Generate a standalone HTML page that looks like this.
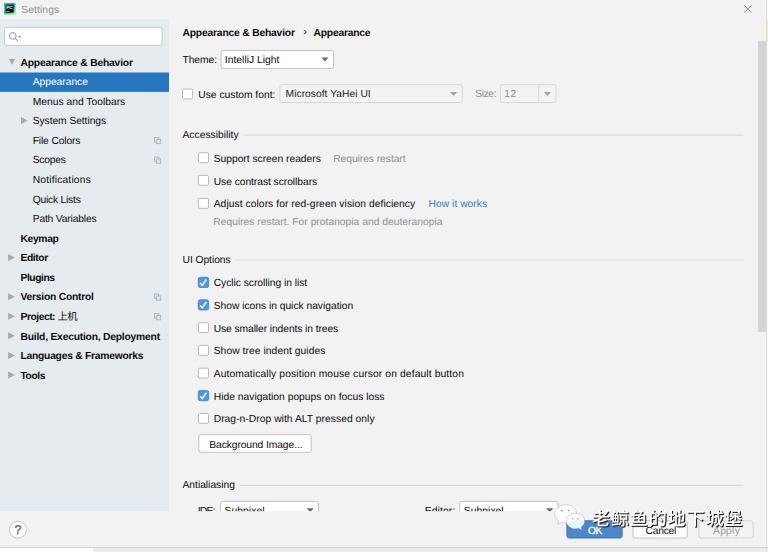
<!DOCTYPE html>
<html lang="en"><head><meta charset="utf-8"><title>Settings</title><style>

*{margin:0;padding:0;box-sizing:border-box}
html,body{width:768px;height:552px;overflow:hidden;background:#f2f2f2}
body{position:relative;font-family:"Liberation Sans", "Noto Sans CJK SC", sans-serif;font-size:10.3px;color:#000;text-rendering:geometricPrecision}
.a{position:absolute}
.t{position:absolute;white-space:nowrap;line-height:15px;height:15px;color:#0c0c0c}
.b{font-weight:bold}
.w{color:#fff}
.ok{-webkit-text-stroke:0.3px #fff}
.gray{color:#909090}
.gray2{color:#9d9d9d}
.dis{color:#1e1e1e}
.link{color:#3a7cbf}

</style></head><body>
<svg class="a" style="left:0;top:0" width="768" height="552" viewBox="0 0 768 552">
<defs><linearGradient id="g1" x1="0" y1="0.6" x2="1" y2="0.2"><stop offset="0" stop-color="#21d789"/><stop offset="0.5" stop-color="#16c5c0"/><stop offset="1" stop-color="#0cb4ec"/></linearGradient>
<linearGradient id="g2" x1="0.35" y1="0.25" x2="1" y2="1"><stop offset="0" stop-color="#fcf84a" stop-opacity="0"/><stop offset="0.5" stop-color="#fcf84a" stop-opacity="0"/><stop offset="1" stop-color="#fcf84a"/></linearGradient></defs>
<rect x="0.00" y="19.10" width="168.90" height="491.90" rx="0.00" fill="#e6ebf0"/>
<rect x="4" y="3" width="11.4" height="11.4" fill="url(#g1)"/><rect x="4" y="3" width="11.4" height="11.4" fill="url(#g2)"/>
<rect x="5.6" y="4.6" width="8" height="8" fill="#0b0b0b"/>
<text x="6.2" y="9.2" font-family="Liberation Sans, sans-serif" font-weight="bold" font-size="4.6" fill="#fff">PC</text>
<rect x="6.4" y="10.9" width="2.9" height="0.6" fill="#fff"/>
<path d="M744.2 5.2 L751.4 12.6 M751.4 5.2 L744.2 12.6" stroke="#777" stroke-width="0.9" fill="none"/>
<rect x="4.60" y="27.60" width="157.50" height="17.70" rx="1.70" fill="#fff" stroke="#c4cacf" stroke-width="1"/>
<circle cx="12.8" cy="35.9" r="3.35" stroke="#85909a" stroke-width="0.95" fill="none"/><path d="M15.2 38.4 L17.7 40.9" stroke="#85909a" stroke-width="1.1"/>
<path d="M17.90 35.90 h3.30 l-1.65 1.90 z" fill="#85909a"/>
<rect x="0.00" y="72.50" width="169.00" height="19.40" rx="0.00" fill="#2675bf"/>
<path d="M8.90 59.03 h6.20 l-3.10 5.60 z" fill="#a8a9aa"/>
<path d="M21.00 116.94 v7.20 l6.60 -3.60 z" fill="#a8a9aa"/>
<path d="M8.10 254.03 v7.00 l6.80 -3.50 z" fill="#a8a9aa"/>
<path d="M8.10 293.17 v7.00 l6.80 -3.50 z" fill="#a8a9aa"/>
<path d="M8.10 312.74 v7.00 l6.80 -3.50 z" fill="#a8a9aa"/>
<path d="M8.10 332.31 v7.00 l6.80 -3.50 z" fill="#a8a9aa"/>
<path d="M8.10 351.88 v7.00 l6.80 -3.50 z" fill="#a8a9aa"/>
<path d="M8.10 371.45 v7.00 l6.80 -3.50 z" fill="#a8a9aa"/>
<rect x="154.45" y="137.46" width="4.30" height="4.30" rx="0.00" fill="#e6ebf0" stroke="#aab5c0" stroke-width="0.9"/><rect x="156.35" y="139.36" width="4.30" height="4.30" rx="0.00" fill="#dde4ea" stroke="#aab5c0" stroke-width="0.9"/>
<rect x="154.45" y="157.03" width="4.30" height="4.30" rx="0.00" fill="#e6ebf0" stroke="#aab5c0" stroke-width="0.9"/><rect x="156.35" y="158.93" width="4.30" height="4.30" rx="0.00" fill="#dde4ea" stroke="#aab5c0" stroke-width="0.9"/>
<rect x="154.45" y="294.02" width="4.30" height="4.30" rx="0.00" fill="#e6ebf0" stroke="#aab5c0" stroke-width="0.9"/><rect x="156.35" y="295.92" width="4.30" height="4.30" rx="0.00" fill="#dde4ea" stroke="#aab5c0" stroke-width="0.9"/>
<rect x="154.45" y="313.59" width="4.30" height="4.30" rx="0.00" fill="#e6ebf0" stroke="#aab5c0" stroke-width="0.9"/><rect x="156.35" y="315.49" width="4.30" height="4.30" rx="0.00" fill="#dde4ea" stroke="#aab5c0" stroke-width="0.9"/>
<rect x="221.10" y="50.50" width="112.40" height="18.00" rx="2.10" fill="#fff" stroke="#c2c2c2" stroke-width="1"/>
<path d="M321.50 57.40 h7.00 l-3.50 4.00 z" fill="#6a6a6a"/>
<rect x="182.50" y="89.05" width="10.10" height="9.90" rx="1.30" fill="#fff" stroke="#b8b8b8" stroke-width="1"/>
<rect x="279.90" y="84.60" width="182.40" height="17.90" rx="2.10" fill="#f3f3f3" stroke="#d7d7d7" stroke-width="1"/>
<path d="M450.00 92.00 h7.00 l-3.50 4.10 z" fill="#a2a2a2"/>
<rect x="500.40" y="84.60" width="55.50" height="17.90" rx="2.10" fill="#f3f3f3" stroke="#d7d7d7" stroke-width="1"/>
<rect x="538.20" y="85.00" width="1.00" height="17.20" rx="0.00" fill="#d9d9d9"/>
<path d="M543.85 92.00 h7.20 l-3.60 4.10 z" fill="#a2a2a2"/>
<rect x="243.70" y="134.60" width="499.60" height="1.00" rx="0.00" fill="#d3d3d3"/>
<rect x="235.60" y="259.50" width="507.70" height="1.00" rx="0.00" fill="#dfdfdf"/>
<rect x="239.50" y="484.80" width="503.80" height="1.00" rx="0.00" fill="#d3d3d3"/>
<rect x="198.40" y="152.65" width="10.10" height="9.90" rx="1.30" fill="#fff" stroke="#b8b8b8" stroke-width="1"/>
<rect x="198.40" y="175.45" width="10.10" height="9.90" rx="1.30" fill="#fff" stroke="#b8b8b8" stroke-width="1"/>
<rect x="198.40" y="198.45" width="10.10" height="9.90" rx="1.30" fill="#fff" stroke="#b8b8b8" stroke-width="1"/>
<rect x="198.25" y="277.30" width="10.40" height="10.20" rx="1.90" fill="#4d98e2" stroke="#4890d8" stroke-width="1"/><path d="M200.25 283.10 l2.1 2.3 l3.9 -5.9" stroke="#fff" stroke-width="1.45" fill="none" stroke-linejoin="miter"/>
<rect x="198.25" y="299.80" width="10.40" height="10.20" rx="1.90" fill="#4d98e2" stroke="#4890d8" stroke-width="1"/><path d="M200.25 305.60 l2.1 2.3 l3.9 -5.9" stroke="#fff" stroke-width="1.45" fill="none" stroke-linejoin="miter"/>
<rect x="198.40" y="322.65" width="10.10" height="9.90" rx="1.30" fill="#fff" stroke="#b8b8b8" stroke-width="1"/>
<rect x="198.40" y="345.45" width="10.10" height="9.90" rx="1.30" fill="#fff" stroke="#b8b8b8" stroke-width="1"/>
<rect x="198.40" y="368.15" width="10.10" height="9.90" rx="1.30" fill="#fff" stroke="#b8b8b8" stroke-width="1"/>
<rect x="198.25" y="390.50" width="10.40" height="10.20" rx="1.90" fill="#4d98e2" stroke="#4890d8" stroke-width="1"/><path d="M200.25 396.30 l2.1 2.3 l3.9 -5.9" stroke="#fff" stroke-width="1.45" fill="none" stroke-linejoin="miter"/>
<rect x="198.40" y="413.45" width="10.10" height="9.90" rx="1.30" fill="#fff" stroke="#b8b8b8" stroke-width="1"/>
<rect x="198.80" y="434.60" width="112.50" height="17.70" rx="2.30" fill="#fff" stroke="#c4c4c4" stroke-width="1"/>
<rect x="220.50" y="501.40" width="98.00" height="18.10" rx="2.10" fill="#fff" stroke="#c2c2c2" stroke-width="1"/>
<path d="M306.65 508.20 h7.20 l-3.60 4.00 z" fill="#6a6a6a"/>
<rect x="459.80" y="501.40" width="98.30" height="18.10" rx="2.10" fill="#fff" stroke="#c2c2c2" stroke-width="1"/>
<path d="M546.15 508.20 h7.20 l-3.60 4.00 z" fill="#6a6a6a"/>
<rect x="758.10" y="41.00" width="7.90" height="291.00" rx="0.00" fill="#d4d4d4"/>
</svg>
<div class="t gray" id="t0" style="left:21.20px;top:3px;letter-spacing:0.114px;">Settings</div>
<div class="t b" id="t1" style="left:20.50px;top:56px;letter-spacing:-0.188px;">Appearance &amp; Behavior</div>
<div class="t w" id="t2" style="left:32.70px;top:75px;letter-spacing:-0.028px;">Appearance</div>
<div class="t " id="t3" style="left:32.70px;top:95px;letter-spacing:0.000px;">Menus and Toolbars</div>
<div class="t " id="t4" style="left:32.70px;top:114px;letter-spacing:-0.071px;">System Settings</div>
<div class="t " id="t5" style="left:32.70px;top:134px;letter-spacing:-0.150px;">File Colors</div>
<div class="t " id="t6" style="left:32.70px;top:153px;letter-spacing:-0.250px;">Scopes</div>
<div class="t " id="t7" style="left:32.70px;top:173px;letter-spacing:0.167px;">Notifications</div>
<div class="t " id="t8" style="left:32.70px;top:193px;letter-spacing:-0.225px;">Quick Lists</div>
<div class="t " id="t9" style="left:32.70px;top:212px;letter-spacing:-0.173px;">Path Variables</div>
<div class="t b" id="t10" style="left:20.50px;top:232px;letter-spacing:-0.350px;">Keymap</div>
<div class="t b" id="t11" style="left:20.50px;top:251px;letter-spacing:-0.400px;">Editor</div>
<div class="t b" id="t12" style="left:20.50px;top:271px;letter-spacing:-0.458px;">Plugins</div>
<div class="t b" id="t13" style="left:20.50px;top:290px;letter-spacing:-0.232px;">Version Control</div>
<div class="t b" id="t14" style="left:20.50px;top:310px;letter-spacing:-0.475px;">Project: <span style="font-weight:400">上机</span></div>
<div class="t b" id="t15" style="left:20.50px;top:330px;letter-spacing:-0.213px;">Build, Execution, Deployment</div>
<div class="t b" id="t16" style="left:20.50px;top:349px;letter-spacing:-0.250px;">Languages &amp; Frameworks</div>
<div class="t b" id="t17" style="left:20.50px;top:369px;letter-spacing:-0.438px;">Tools</div>
<div class="t b" id="t18" style="left:182.50px;top:26px;letter-spacing:-0.188px;">Appearance &amp; Behavior</div>
<div class="t b" id="t19" style="left:313.50px;top:26px;letter-spacing:-0.211px;">Appearance</div>
<div class="t " id="t20" style="left:182.50px;top:53px;letter-spacing:-0.080px;">Theme:</div>
<div class="t " id="t21" style="left:224.85px;top:53px;letter-spacing:0.015px;">IntelliJ Light</div>
<div class="t " id="t22" style="left:198.25px;top:88px;letter-spacing:-0.010px;">Use custom font:</div>
<div class="t dis" id="t23" style="left:285.60px;top:87px;letter-spacing:0.015px;">Microsoft YaHei UI</div>
<div class="t gray" id="t24" style="left:475.35px;top:87px;letter-spacing:-0.425px;">Size:</div>
<div class="t gray" id="t25" style="left:504.30px;top:87px;letter-spacing:0.500px;">12</div>
<div class="t " id="t26" style="left:182.50px;top:128px;letter-spacing:0.000px;">Accessibility</div>
<div class="t " id="t27" style="left:213.70px;top:152px;letter-spacing:-0.024px;">Support screen readers</div>
<div class="t gray" id="t28" style="left:333.20px;top:152px;letter-spacing:-0.057px;">Requires restart</div>
<div class="t " id="t29" style="left:213.70px;top:175px;letter-spacing:-0.057px;">Use contrast scrollbars</div>
<div class="t " id="t30" style="left:213.70px;top:197px;letter-spacing:0.053px;">Adjust colors for red-green vision deficiency</div>
<div class="t link" id="t31" style="left:428.60px;top:197px;letter-spacing:0.014px;">How it works</div>
<div class="t gray" id="t32" style="left:213.25px;top:215px;letter-spacing:0.005px;">Requires restart. For protanopia and deuteranopia</div>
<div class="t " id="t33" style="left:182.50px;top:253px;letter-spacing:-0.056px;">UI Options</div>
<div class="t " id="t34" style="left:213.70px;top:276px;letter-spacing:-0.043px;">Cyclic scrolling in list</div>
<div class="t " id="t35" style="left:213.70px;top:299px;letter-spacing:-0.026px;">Show icons in quick navigation</div>
<div class="t " id="t36" style="left:213.70px;top:322px;letter-spacing:-0.093px;">Use smaller indents in trees</div>
<div class="t " id="t37" style="left:213.70px;top:344px;letter-spacing:0.057px;">Show tree indent guides</div>
<div class="t " id="t38" style="left:213.70px;top:367px;letter-spacing:0.111px;">Automatically position mouse cursor on default button</div>
<div class="t " id="t39" style="left:213.70px;top:390px;letter-spacing:0.007px;">Hide navigation popups on focus loss</div>
<div class="t " id="t40" style="left:213.70px;top:412px;letter-spacing:0.031px;">Drag-n-Drop with ALT pressed only</div>
<div class="t " id="t41" style="left:209.25px;top:438px;letter-spacing:-0.097px;">Background Image...</div>
<div class="t " id="t42" style="left:182.50px;top:478px;letter-spacing:-0.023px;">Antialiasing</div>
<div class="t " id="t43" style="left:197.70px;top:504px;letter-spacing:-0.750px;">IDE:</div>
<div class="t " id="t44" style="left:224.50px;top:504px;letter-spacing:0.071px;">Subpixel</div>
<div class="t " id="t45" style="left:424.75px;top:504px;letter-spacing:0.125px;">Editor:</div>
<div class="t " id="t46" style="left:463.85px;top:504px;letter-spacing:0.043px;">Subpixel</div>
<div class="t" style="left:303.3px;top:25px;font-size:11px;color:#333">›</div>
<svg class="a" style="left:0;top:0" width="768" height="552" viewBox="0 0 768 552">
<rect x="0.00" y="511.20" width="766.00" height="36.80" rx="0.00" fill="#f2f2f2"/>
<rect x="766.00" y="0.00" width="1.00" height="548.00" rx="0.00" fill="#cfcfcf"/>
<rect x="766.60" y="0.00" width="1.40" height="552.00" rx="0.00" fill="#f7f7f7"/>
<rect x="766.80" y="19.60" width="1.20" height="21.20" rx="0.00" fill="#f5f19f"/>
<rect x="0.00" y="547.00" width="768.00" height="5.00" rx="0.00" fill="#ececec"/>
<rect x="0.00" y="547.00" width="768.00" height="1.00" rx="0.00" fill="#d2d2d2"/>
<rect x="0.00" y="548.00" width="93.00" height="4.00" rx="0.00" fill="#fdfdfd"/>
<circle cx="18" cy="529.7" r="8.5" fill="#fff" stroke="#c6c6c6" stroke-width="1"/>
<rect x="566.90" y="520.80" width="55.30" height="17.20" rx="2.30" fill="#4a88c7" stroke="#3f7ab8" stroke-width="1"/>
<rect x="633.00" y="520.80" width="54.30" height="17.20" rx="2.30" fill="#fff" stroke="#c4c4c4" stroke-width="1"/>
<rect x="698.90" y="520.80" width="54.20" height="17.20" rx="2.30" fill="#f3f3f3" stroke="#d2d2d2" stroke-width="1"/>
</svg>
<div class="t" style="left:14.6px;top:523px;color:#6a6a6a;font-size:12.6px;-webkit-text-stroke:0.35px #6a6a6a">?</div>
<div class="t w ok" id="t47" style="left:587.95px;top:524px;letter-spacing:-0.450px;">OK</div>
<div class="t " id="t48" style="left:645.55px;top:524px;letter-spacing:-0.260px;">Cancel</div>
<div class="t gray2" id="t49" style="left:713.00px;top:524px;letter-spacing:0.262px;">Apply</div>
<svg class="a" style="left:552px;top:500px" width="36" height="32" viewBox="0 0 36 32">
<g fill="#fff" fill-opacity="0.9" stroke="#8e8e8e" stroke-opacity="0.6" stroke-width="0.6">
<path d="M13.6 4.6c-6 0-10.9 4.1-10.9 9.200 0 2.900 1.600 5.500 4.100 7.200l-1.300 3.600 4.200-2.200c1.200.4 2.500.6 3.900.6 6 0 10.900-4.100 10.900-9.200S19.600 4.600 13.600 4.600z"/>
<path d="M23.500 13.200c-5 0-9.100 3.500-9.100 7.800s4.100 7.800 9.100 7.800c1.100 0 2.100-.2 3.100-.5l3.400 1.800-1-3c2.200-1.400 3.600-3.600 3.600-6.100 0-4.300-4.100-7.800-9.100-7.800z"/>
</g>
<g fill="#8d8d8d" fill-opacity="0.75"><circle cx="10" cy="10.600" r="1"/><circle cx="16.800" cy="10.600" r="1"/><circle cx="20.600" cy="18.800" r="0.800"/><circle cx="26.200" cy="18.800" r="0.800"/></g>
</svg>
<div class="t" style="left:592.4px;top:506px;height:26px;line-height:26px;font-size:18px;font-weight:500;letter-spacing:0.9px;color:#fff;will-change:transform;text-shadow:1px 1px 0 #222,1px 1px 1px #444">老鲸鱼的地下城堡</div>
</body></html>
